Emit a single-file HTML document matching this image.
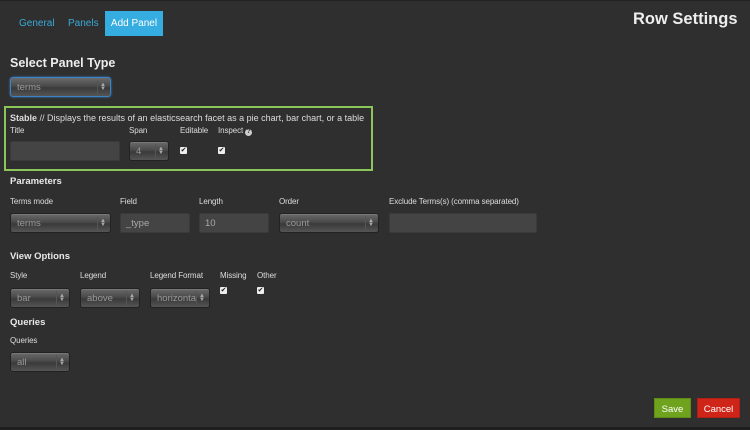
<!DOCTYPE html>
<html><head><style>
*{margin:0;padding:0;box-sizing:border-box}
body{width:750px;height:430px;background:#2f2f2f;font-family:"Liberation Sans",sans-serif;color:#ddd;position:relative;overflow:hidden}
.a{position:absolute;white-space:nowrap}
.lbl{font-size:8px;color:#ddd;letter-spacing:-0.1px}
.h{font-size:9.5px;font-weight:bold;color:#e8e8e8}
.sel{position:absolute;height:20px;border:1px solid #222;border-radius:3px;background:linear-gradient(#6a6a6a,#4a4a4a 45%,#3a3a3a 55%,#555);color:#999;font-size:9.5px;padding:4px 0 0 6px;box-shadow:inset 0 1px 0 #777}
.sel:after{content:"";position:absolute;right:12px;top:2px;bottom:2px;border-left:1px solid #555}
.sel i{position:absolute;right:4px;top:5px;font-style:normal;font-size:6px;line-height:4px;color:#aaa}
.inp{position:absolute;height:20px;background:#444;border:1px solid #3a3a3a;border-radius:2px;color:#aaa;font-size:9.5px;padding:4px 0 0 5px}
.cb{position:absolute;width:7px;height:7px;background:#eee;border-radius:1px;color:#222;font-size:7px;line-height:7px;text-align:center}
.q{display:inline-block;width:7px;height:7px;border-radius:50%;background:#ccc;color:#2f2f2f;font-size:6px;line-height:7px;text-align:center;font-weight:bold;vertical-align:0}
</style></head><body>
<div class="a" style="left:0;top:0;width:750px;height:1px;background:#222"></div>
<div class="a" style="left:0;top:427px;width:750px;height:3px;background:#1e1e1e"></div>
<div class="a" style="left:19px;top:18px;font-size:10px;color:#3aa8d8">General</div>
<div class="a" style="left:68px;top:18px;font-size:10px;color:#3aa8d8">Panels</div>
<div class="a" style="left:105px;top:11px;width:58px;height:25px;background:#36ade1;color:#fff;font-size:10px;padding-top:7px;text-align:center">Add Panel</div>
<div class="a" style="left:633px;top:10px;font-size:16.5px;font-weight:bold;color:#eee">Row Settings</div>
<div class="a" style="left:10px;top:56px;font-size:12.5px;font-weight:bold;color:#eee">Select Panel Type</div>
<div class="sel" style="left:10px;top:77px;width:101px;border:1px solid #3b82c6;box-shadow:0 0 2px #3b82c6">terms<i>▲<br>▼</i></div>
<div class="a" style="left:4px;top:106px;width:369px;height:65px;border:2px solid #8cc55a"></div>
<div class="a" style="left:10px;top:113px;font-size:9px;color:#ddd"><b>Stable</b> // Displays the results of an elasticsearch facet as a pie chart, bar chart, or a table</div>
<div class="a lbl" style="left:10px;top:126px">Title</div>
<div class="a lbl" style="left:129px;top:126px">Span</div>
<div class="a lbl" style="left:180px;top:126px">Editable</div>
<div class="a lbl" style="left:218px;top:126px">Inspect <span class="q">?</span></div>
<div class="inp" style="left:10px;top:141px;width:110px"></div>
<div class="sel" style="left:129px;top:141px;width:40px">4<i>▲<br>▼</i></div>
<div class="cb" style="left:180px;top:147px">✔</div>
<div class="cb" style="left:218px;top:147px">✔</div>
<div class="a h" style="left:10px;top:176px">Parameters</div>
<div class="a lbl" style="left:10px;top:197px">Terms mode</div>
<div class="a lbl" style="left:120px;top:197px">Field</div>
<div class="a lbl" style="left:199px;top:197px">Length</div>
<div class="a lbl" style="left:279px;top:197px">Order</div>
<div class="a lbl" style="left:389px;top:197px">Exclude Terms(s) (comma separated)</div>
<div class="sel" style="left:10px;top:213px;width:101px">terms<i>▲<br>▼</i></div>
<div class="inp" style="left:120px;top:213px;width:70px">_type</div>
<div class="inp" style="left:199px;top:213px;width:70px">10</div>
<div class="sel" style="left:279px;top:213px;width:100px">count<i>▲<br>▼</i></div>
<div class="inp" style="left:389px;top:213px;width:148px"></div>
<div class="a h" style="left:10px;top:251px">View Options</div>
<div class="a lbl" style="left:10px;top:271px">Style</div>
<div class="a lbl" style="left:80px;top:271px">Legend</div>
<div class="a lbl" style="left:150px;top:271px">Legend Format</div>
<div class="a lbl" style="left:220px;top:271px">Missing</div>
<div class="a lbl" style="left:257px;top:271px">Other</div>
<div class="sel" style="left:10px;top:288px;width:60px">bar<i>▲<br>▼</i></div>
<div class="sel" style="left:80px;top:288px;width:60px">above<i>▲<br>▼</i></div>
<div class="sel" style="left:150px;top:288px;width:60px;overflow:hidden">horizonta<i>▲<br>▼</i></div>
<div class="cb" style="left:220px;top:287px">✔</div>
<div class="cb" style="left:257px;top:287px">✔</div>
<div class="a h" style="left:10px;top:317px">Queries</div>
<div class="a lbl" style="left:10px;top:336px">Queries</div>
<div class="sel" style="left:10px;top:352px;width:60px">all<i>▲<br>▼</i></div>
<div class="a" style="left:654px;top:398px;width:37px;height:20px;background:#6fa21d;border:1px solid #5e8c16;color:#fff;font-size:9.5px;text-align:center;padding-top:5px">Save</div>
<div class="a" style="left:697px;top:398px;width:43px;height:20px;background:#cf2418;border:1px solid #b01e14;color:#fff;font-size:9.5px;text-align:center;padding-top:5px">Cancel</div>
</body></html>
